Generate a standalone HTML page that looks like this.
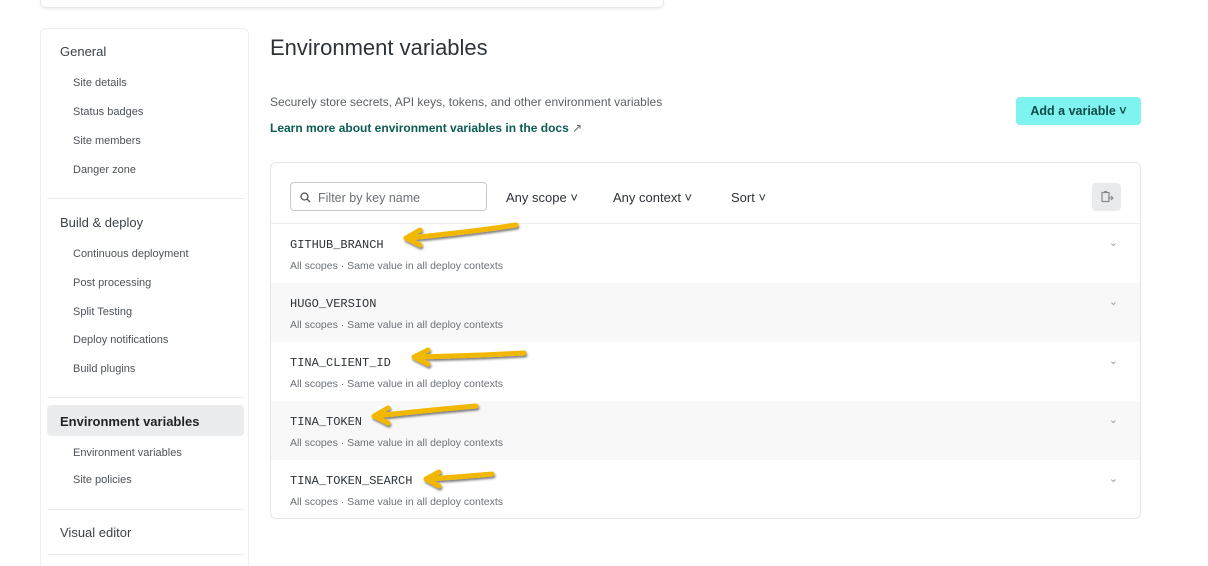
<!DOCTYPE html><html style="overflow:hidden;height:566px"><head><style>
body{margin:0;width:1208px;height:566px;background:#fff;font-family:"Liberation Sans",sans-serif;position:relative;overflow:hidden;color:#2d3339}
.abs{position:absolute}
.top{left:40px;top:0;width:622px;height:7px;border:1px solid #e6e8ea;border-top:none;border-radius:0 0 6px 6px;box-shadow:0 1px 3px rgba(0,0,0,.08)}
.side{left:40px;top:28px;width:209px;height:538px;border:1px solid #eceeef;border-bottom:none;border-radius:6px 6px 0 0;box-sizing:border-box}
.h{position:absolute;left:60px;font-size:13px;color:#3b4248}
.s{position:absolute;left:73px;font-size:11px;color:#4d5358}
.hr{position:absolute;left:47px;width:197px;border-top:1px solid #e8eaeb}
.card{left:270px;top:162px;width:869px;height:355px;border:1px solid #e4e6e8;border-radius:6px;overflow:hidden}
.row{position:absolute;left:0;width:869px;height:59px}
.k{position:absolute;left:19px;top:14px;font-family:"Liberation Mono",monospace;font-size:12px;color:#2d3339}
.d{position:absolute;left:19px;top:36px;font-size:10.5px;color:#6b7177}
.cv{position:absolute;right:22px;top:12px;font-size:11px;color:#999}
.dd{position:absolute;top:190px;font-size:13px;color:#2d3339}
</style></head><body>
<div class="abs top"></div>
<div class="abs side"></div>
<div class="h" style="top:44px">General</div>
<div class="s" style="top:77px">Site details</div>
<div class="s" style="top:106px">Status badges</div>
<div class="s" style="top:135px">Site members</div>
<div class="s" style="top:164px">Danger zone</div>
<div class="hr" style="top:198px"></div>
<div class="h" style="top:215px">Build &amp; deploy</div>
<div class="s" style="top:248px">Continuous deployment</div>
<div class="s" style="top:277px">Post processing</div>
<div class="s" style="top:306px">Split Testing</div>
<div class="s" style="top:334px">Deploy notifications</div>
<div class="s" style="top:363px">Build plugins</div>
<div class="hr" style="top:397px"></div>
<div class="abs" style="left:47px;top:405px;width:197px;height:31px;background:#ebeced;border-radius:4px"></div>
<div class="h" style="top:414px;font-weight:bold;color:#1f2428">Environment variables</div>
<div class="s" style="top:447px">Environment variables</div>
<div class="s" style="top:474px">Site policies</div>
<div class="hr" style="top:509px"></div>
<div class="h" style="top:525px">Visual editor</div>
<div class="hr" style="top:554px"></div>

<div class="abs" style="left:270px;top:35px;font-size:22px;color:#2d3339">Environment variables</div>
<div class="abs" style="left:270px;top:95px;font-size:12px;color:#5a6065">Securely store secrets, API keys, tokens, and other environment variables</div>
<div class="abs" style="left:270px;top:121px;font-size:12px;color:#0b5b57;font-weight:bold">Learn more about environment variables in the docs <span style="font-weight:normal;color:#666">↗</span></div>
<div class="abs" style="left:1016px;top:97px;width:125px;height:28px;background:#7ff3ef;border-radius:4px;font-size:12.5px;font-weight:bold;color:#0d4b49;line-height:28px;text-align:center">Add a variable ˅</div>

<div class="abs card">
<div class="abs" style="left:19px;top:19px;width:195px;height:27px;border:1px solid #c5c9cc;border-radius:4px"></div>
<svg class="abs" style="left:29px;top:29px" width="11" height="11" viewBox="0 0 11 11"><circle cx="4.5" cy="4.5" r="3.5" fill="none" stroke="#555" stroke-width="1.3"/><path d="M7 7l3 3" stroke="#555" stroke-width="1.3"/></svg>
<div class="abs" style="left:47px;top:28px;font-size:12.5px;color:#6b7177">Filter by key name</div>
<div class="abs" style="left:821px;top:20px;width:29px;height:28px;background:#e9eaeb;border-radius:4px"></div>
<svg class="abs" style="left:829px;top:27px" width="14" height="14" viewBox="0 0 14 14"><rect x="2" y="2.5" width="7" height="9" fill="none" stroke="#888" stroke-width="1.2"/><rect x="4" y="1" width="3" height="2" fill="#888"/><path d="M8 8h5M11 6l2 2-2 2" stroke="#888" fill="none"/></svg>
<div class="abs" style="left:0;top:60px;width:869px;border-top:1px solid #ececec"></div>
<div class="row" style="top:61px"><div class="k">GITHUB_BRANCH</div><div class="d">All scopes · Same value in all deploy contexts</div><div class="cv">⌄</div></div>
<div class="row" style="top:120px;background:#f8f8f8"><div class="k">HUGO_VERSION</div><div class="d">All scopes · Same value in all deploy contexts</div><div class="cv">⌄</div></div>
<div class="row" style="top:179px"><div class="k">TINA_CLIENT_ID</div><div class="d">All scopes · Same value in all deploy contexts</div><div class="cv">⌄</div></div>
<div class="row" style="top:238px;background:#f8f8f8"><div class="k">TINA_TOKEN</div><div class="d">All scopes · Same value in all deploy contexts</div><div class="cv">⌄</div></div>
<div class="row" style="top:297px;height:58px"><div class="k">TINA_TOKEN_SEARCH</div><div class="d">All scopes · Same value in all deploy contexts</div><div class="cv">⌄</div></div>
</div>
<div class="dd" style="left:506px">Any scope ˅</div>
<div class="dd" style="left:613px">Any context ˅</div>
<div class="dd" style="left:731px">Sort ˅</div>

<svg class="abs" style="left:0;top:0" width="1208" height="566">
<defs><filter id="sh"><feDropShadow dx="1" dy="2" stdDeviation="1" flood-color="#000" flood-opacity=".5"/></filter></defs>
<g fill="none" stroke="#f2b705" stroke-width="5" stroke-linecap="round" stroke-linejoin="round" filter="url(#sh)">
<path d="M516 225 Q470 232 408 238 M420 230 L406 238 L420 245"/>
<path d="M524 353 Q470 356 415 357 M428 350 L414 357 L428 364"/>
<path d="M476 406 Q430 410 375 416 M388 408 L374 416 L388 423"/>
<path d="M492 474 Q460 477 427 479 M439 472 L426 479 L439 486"/>
</g></svg>
</body></html>
